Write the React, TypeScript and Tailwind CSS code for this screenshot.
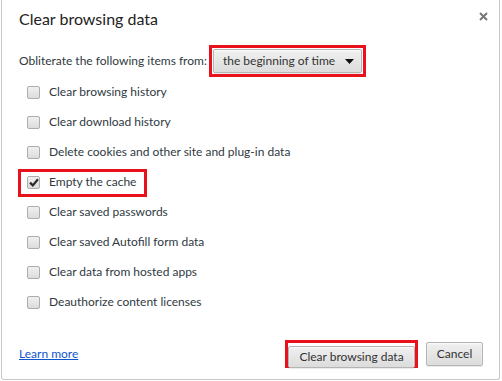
import React from 'react';

const items = [
  { label: 'Clear browsing history', checked: false },
  { label: 'Clear download history', checked: false },
  { label: 'Delete cookies and other site and plug-in data', checked: false },
  { label: 'Empty the cache', checked: true, marked: true },
  { label: 'Clear saved passwords', checked: false },
  { label: 'Clear saved Autofill form data', checked: false },
  { label: 'Clear data from hosted apps', checked: false },
  { label: 'Deauthorize content licenses', checked: false },
];

const btn =
  'rounded-[2px] border border-[#b4b4b4] bg-gradient-to-b from-[#f0f0f0] to-[#dcdcdc] text-[12px] text-[#333] shadow-[0_1px_0_rgba(0,0,0,0.08),inset_0_1px_2px_rgba(255,255,255,0.75)]';

function Checkbox({ checked }: { checked: boolean }) {
  return (
    <span className="flex h-[13px] w-[13px] items-center justify-center rounded-[2px] border border-[#adadad] bg-gradient-to-b from-[#f0f0f0] to-[#dcdcdc]">
      {checked && (
        <svg width="10" height="9" viewBox="0 0 10 9">
          <path d="M1 4.6 L3.8 7.4 L9 1.2" fill="none" stroke="#2a2a2a" strokeWidth="2.2" />
        </svg>
      )}
    </span>
  );
}

export default function App() {
  return (
    <div
      className="relative h-[381px] w-[502px] overflow-hidden bg-white text-[#303942]"
      style={{ fontFamily: 'Lato, "Open Sans", sans-serif' }}
    >
      <div className="ml-[1px] flex h-[380px] w-[499px] flex-col rounded-b-[3px] border-x border-b border-[#c8c8c8]">
        <div className="flex items-start justify-between pl-[17px] pr-[11px] pt-[9px]">
          <h1 className="text-[16px] leading-[20px] text-[#222]">Clear browsing data</h1>
          <svg width="9" height="9" viewBox="0 0 9 9" className="mt-[3px]">
            <path d="M1 1 L8 8 M8 1 L1 8" stroke="#777" strokeWidth="2" />
          </svg>
        </div>

        <div className="mt-[16px] flex items-center pl-[17px]">
          <span className="text-[12px]">Obliterate the following items from:</span>
          <div className="ml-[2px] border-[3px] border-[#e8111c] p-[1px]">
            <div className={`${btn} flex h-[24px] w-[149px] items-center justify-between pl-[9px] pr-[7px]`}>
              <span>the beginning of time</span>
              <svg width="9" height="5" viewBox="0 0 9 5">
                <path d="M0 0 H9 L4.5 5 Z" fill="#111" />
              </svg>
            </div>
          </div>
        </div>

        <div className="flex flex-col">
          {items.map((it) => (
            <div key={it.label} className="relative flex h-[30px] items-center pl-[25px]">
              {it.marked && (
                <div className="absolute left-[16px] top-[2px] h-[28px] w-[129px] border-[3px] border-[#e8111c]" />
              )}
              <Checkbox checked={it.checked} />
              <span className="ml-[9px] text-[12px]">{it.label}</span>
            </div>
          ))}
        </div>

        <div className="mt-auto flex items-center pb-[11px] pl-[17px] pr-[16px]">
          <a href="#" className="text-[12px] text-[#15c] underline">
            Learn more
          </a>
          <div className="ml-auto h-[28px] border-[3px] border-[#e8111c]">
            <button className={`${btn} h-[22px] w-[127px]`}>Clear browsing data</button>
          </div>
          <button className={`${btn} ml-[8px] h-[24px] w-[57px]`}>Cancel</button>
        </div>
      </div>
    </div>
  );
}
